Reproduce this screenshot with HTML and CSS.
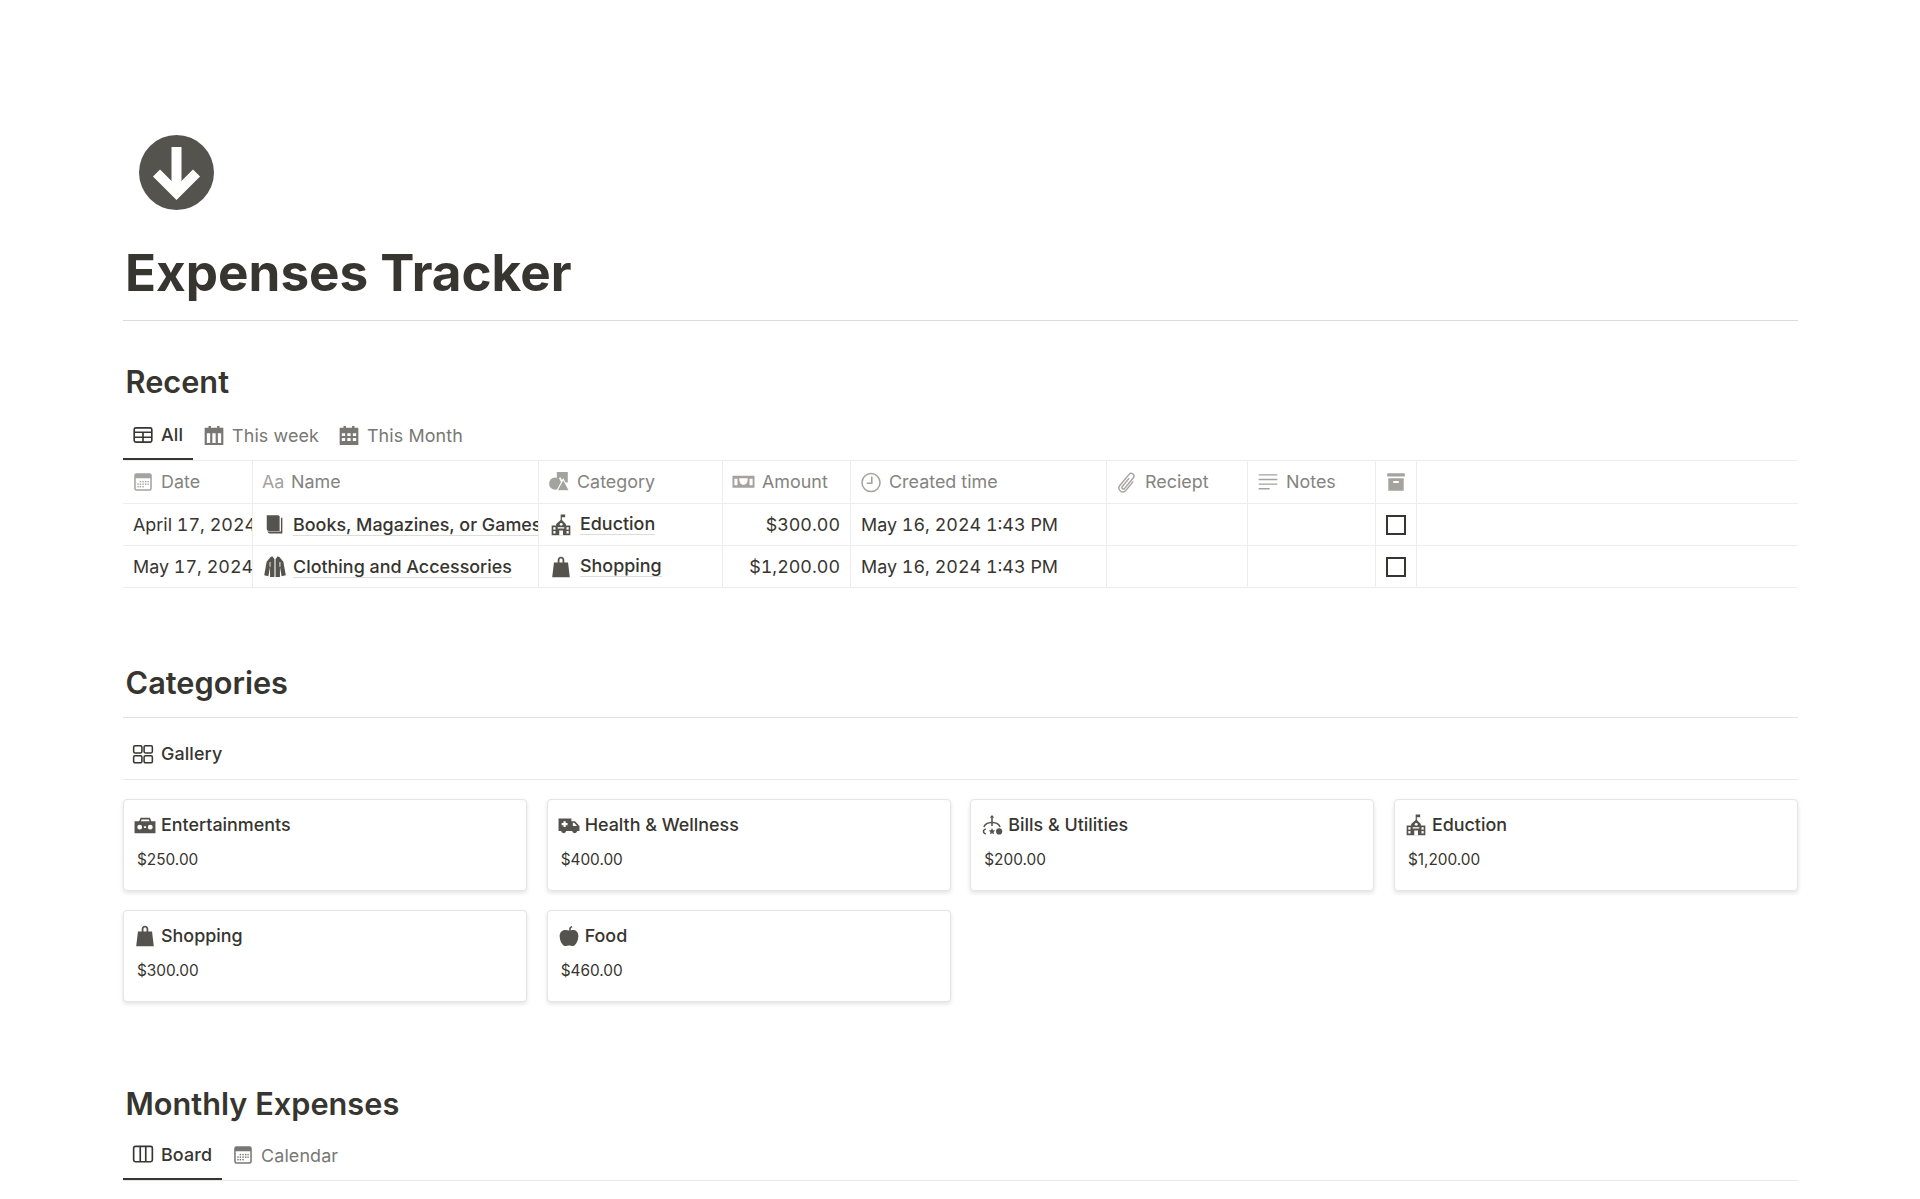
FILE: index.html
```html
<!DOCTYPE html>
<html lang="en">
<head>
<meta charset="utf-8">
<title>Expenses Tracker</title>
<link rel="stylesheet" href="styles.css">
</head>
<body>
<svg class="sprite" aria-hidden="true">
  <symbol id="i-school" viewBox="0 0 20 20"><path d="M9.700.5v5L5.600 9.200v1.300H1.500v8.900h17v-8.900h-4.100V9.200L10.800 5.500V3H13.800V.5z"/><g fill="#fff"><rect x="3" y="12" width="2" height="2.200"/><rect x="3" y="15.500" width="2" height="2.200"/><rect x="15" y="12" width="2" height="2.200"/><rect x="15" y="15.500" width="2" height="2.200"/><circle cx="10.200" cy="9.400" r="1.300"/><rect x="7" y="12" width="6" height="1.200"/><rect x="8.400" y="15" width="3.400" height="4.500"/></g></symbol>
  <symbol id="i-bag" viewBox="0 0 20 20"><path d="M7 6V3.600C7 1.800 8.200.6 10 .6s3 1.200 3 3V6h3.400l1.600 13.400H2L3.600 6zM8.600 6h2.800V3.600c0-.9-.5-1.400-1.400-1.400s-1.400.5-1.400 1.400z" fill-rule="evenodd"/></symbol>
  <symbol id="i-cal" viewBox="0 0 20 20"><path fill-rule="evenodd" d="M4 2h12a2 2 0 0 1 2 2v12a2 2 0 0 1-2 2H4a2 2 0 0 1-2-2V4a2 2 0 0 1 2-2zm-.6 4.500V16c0 .4.3.7.7.7h11.800c.4 0 .7-.3.7-.7V6.500z"/><g><rect x="7" y="9" width="1.300" height="1.300"/><rect x="9.400" y="9" width="1.300" height="1.300"/><rect x="11.800" y="9" width="1.300" height="1.300"/><rect x="14" y="9" width="1.200" height="1.300"/><rect x="4.800" y="11.300" width="1.300" height="1.300"/><rect x="7" y="11.300" width="1.300" height="1.300"/><rect x="9.400" y="11.300" width="1.300" height="1.300"/><rect x="11.800" y="11.300" width="1.300" height="1.300"/><rect x="14" y="11.300" width="1.200" height="1.300"/><rect x="4.800" y="13.600" width="1.300" height="1.300"/><rect x="7" y="13.600" width="1.300" height="1.300"/><rect x="9.400" y="13.600" width="1.300" height="1.300"/></g></symbol>
</svg>
<main class="page">
  <div class="page-icon">
    <svg viewBox="0 0 75 75" class="arrow"><circle cx="37.500" cy="37.500" r="37.500" fill="#55534e"/><path d="M37.500 12v44" stroke="#fff" stroke-width="10" fill="none"/><path d="M17.500 38l20 20 20-20" stroke="#fff" stroke-width="10" fill="none"/></svg>
  </div>
  <h1 class="title">Expenses Tracker</h1>
  <div class="rule"></div>

  <section class="recent">
    <h2 class="heading">Recent</h2>
    <div class="tabs">
      <div class="tab active">
        <svg class="ic" viewBox="0 0 20 20"><path fill="none" stroke="currentColor" stroke-width="1.500" d="M3.500 3.500h13a1.500 1.500 0 0 1 1.500 1.500v10a1.500 1.500 0 0 1-1.500 1.500h-13A1.500 1.500 0 0 1 2 15V5a1.500 1.500 0 0 1 1.500-1.500zM2 7.500h16M2 12h16M10 7.500v9"/></svg>
        <span>All</span>
      </div>
      <div class="tab">
        <svg class="ic" viewBox="0 0 20 20"><path fill-rule="evenodd" d="M5 .8h2.200v1.700h5.600V.8H15v1.700h3.500v15.700h-17V2.500H5zM3.500 7.500v8.900h3v-8.900zm5 0v8.900h3v-8.900zm5 0v8.900h3v-8.900z"/></svg>
        <span>This week</span>
      </div>
      <div class="tab">
        <svg class="ic" viewBox="0 0 20 20"><path fill-rule="evenodd" d="M5 .8h2.200v1.700h5.600V.8H15v1.700h3.500v15.700h-17V2.500H5zM3.500 7.500v2.600h3V7.500zm5 0v2.600h3V7.500zm5 0v2.600h3V7.500zm-10 4.300v2.800h3v-2.800zm5 0v2.800h3v-2.800zm5 0v2.800h3v-2.800z"/></svg>
        <span>This Month</span>
      </div>
    </div>
    <div class="table">
      <div class="row head">
        <div class="cell"><svg class="ic hi"><use href="#i-cal"/></svg><span>Date</span></div>
        <div class="cell"><span class="aa">Aa</span><span>Name</span></div>
        <div class="cell"><svg class="ic hi" viewBox="0 0 20 20"><path d="M8 1h10v9.500h-3.800L11 5.500 8.500 9.300 8 8.800z"/><circle cx="6.500" cy="11.500" r="5.500"/><path d="M13.800 7.500l5.700 10.500H8.200z" stroke="#fff" stroke-width="1"/></svg><span>Category</span></div>
        <div class="cell money"><svg class="ic hi wide" viewBox="0 0 24 20"><path fill-rule="evenodd" d="M.5 3.500h23v12.500H.5zM2.500 6.500v7h3.200v-7zm15.800 0v7h3.200v-7zM7.500 6c.3 4.500 1.300 6.800 4.500 6.800S16.200 10.500 16.500 6z"/></svg><span>Amount</span></div>
        <div class="cell"><svg class="ic hi" viewBox="0 0 20 20"><circle cx="10" cy="10.500" r="8.200" fill="none" stroke="currentColor" stroke-width="1.400"/><path d="M10.700 5v6.200H6.200" fill="none" stroke="currentColor" stroke-width="1.400"/></svg><span>Created time</span></div>
        <div class="cell"><svg class="ic hi" viewBox="0 0 20 20"><path fill="none" stroke="currentColor" stroke-width="1.300" d="M12 6.500l-6.400 7.800c-1 1.300 1.100 2.900 2.200 1.600l8-9.700c2-2.500-1.800-5.600-3.900-3.100L3.500 13.200c-2.900 3.700 2.600 8 5.500 4.400l6.700-8.200"/></svg><span>Reciept</span></div>
        <div class="cell"><svg class="ic hi" viewBox="0 0 20 20"><path fill="none" stroke="currentColor" stroke-width="1.300" d="M1.500 3.500h17M1.500 7.700h17M1.500 11.900h17M1.500 16.100h10"/></svg><span>Notes</span></div>
        <div class="cell narrow"><svg class="ic hi" viewBox="0 0 20 20"><path fill-rule="evenodd" d="M2 2h16v3H2zM3 6.500h14V18H3zM7.500 9v1.800h5V9z"/></svg></div>
      </div>
      <div class="row">
        <div class="cell clip value">April 17, 2024</div>
        <div class="cell clip name"><svg class="ic dark" viewBox="0 0 20 20"><path d="M2.500 1.200h10.700l1 1v13.300H4.500a2 2 0 0 1-2-2z"/><path d="M15.400 3.500h1.300v14.200H5.500a2.500 2.500 0 0 1-2.400-1.700h12.300z"/></svg><a class="link">Books, Magazines, or Games</a></div>
        <div class="cell clip cat"><svg class="ic dark"><use href="#i-school"/></svg><a class="link">Eduction</a></div>
        <div class="cell num value">$300.00</div>
        <div class="cell value">May 16, 2024 1:43 PM</div>
        <div class="cell"></div>
        <div class="cell"></div>
        <div class="cell narrow"><span class="check"></span></div>
      </div>
      <div class="row">
        <div class="cell clip value">May 17, 2024</div>
        <div class="cell clip name"><svg class="ic dark" viewBox="0 0 20 20"><path d="M7.500 .3L5.800 1.200 2.400 5.200 .2 17.500l3.800.9 1.500-8.600v9.300h4V2.800zM12.500 .3l1.700.9 3.400 4 2.200 12.300-3.800.9-1.500-8.600v9.300h-4V2.800z"/><path d="M5.500 5.500v4.300M14.500 5.500v4.300" stroke="#fff" stroke-width=".8" fill="none"/></svg><a class="link">Clothing and Accessories</a></div>
        <div class="cell clip cat"><svg class="ic dark"><use href="#i-bag"/></svg><a class="link">Shopping</a></div>
        <div class="cell num value">$1,200.00</div>
        <div class="cell value">May 16, 2024 1:43 PM</div>
        <div class="cell"></div>
        <div class="cell"></div>
        <div class="cell narrow"><span class="check"></span></div>
      </div>
    </div>
  </section>

  <section class="categories">
    <h2 class="heading">Categories</h2>
    <div class="rule thin"></div>
    <div class="tabs gallery-tabs">
      <div class="tab">
        <svg class="ic" viewBox="0 0 20 20"><g fill="none" stroke="currentColor" stroke-width="1.400"><rect x="1.500" y="2.500" width="7.500" height="6.500" rx="1.200"/><rect x="11" y="2.500" width="7.500" height="6.500" rx="1.200"/><rect x="1.500" y="11.500" width="7.500" height="6.500" rx="1.200"/><rect x="11" y="11.500" width="7.500" height="6.500" rx="1.200"/></g></svg>
        <span>Gallery</span>
      </div>
    </div>
    <div class="gallery">
      <article class="card">
        <div class="card-title"><svg class="ic dark" viewBox="0 0 20 20"><path fill-rule="evenodd" d="M6 3.500h8.500l1.300 3H19.500v11H.5v-11h4.200zM7 5l-.8 1.500h8L13.500 5zM5.200 9.800a2.200 2.200 0 1 0 0 4.400 2.200 2.200 0 0 0 0-4.400zm9.600 0a2.200 2.200 0 1 0 0 4.400 2.200 2.200 0 0 0 0-4.400zM9 11.200v1.600h2v-1.600z"/></svg><span>Entertainments</span></div>
        <div class="card-price">$250.00</div>
      </article>
      <article class="card">
        <div class="card-title"><svg class="ic dark" viewBox="0 0 20 20"><path fill-rule="evenodd" d="M.5 4h11.700v2.500h3.300l4 4.500v4.500h-2a2.400 2.400 0 0 1-4.700 0H7.500a2.400 2.400 0 0 1-4.700 0H.5zM5 6.500v1.700H3.300v2H5v1.700h2v-1.700h1.700v-2H7V6.500zM13.500 8v3h3.800l-2.600-3z"/></svg><span>Health &amp; Wellness</span></div>
        <div class="card-price">$400.00</div>
      </article>
      <article class="card">
        <div class="card-title"><svg class="ic dark" viewBox="0 0 20 20"><path d="M10 1l2 2.500h-1.300V7c3.300.2 6.200 1.500 7.300 4.500l-1.300.5c-.9-2.200-3.200-3.300-6-3.500v2.500H9.300V8.500c-2.800.2-5.100 1.300-6 3.500L2 11.500C3.100 8.500 6 7.200 9.300 7V3.500H8z"/><circle cx="16.500" cy="15.800" r="2.800"/><path d="M10 12.800l.9 2 2.100.2-1.600 1.400.5 2.100-1.900-1.100-1.900 1.100.5-2.100L7 15l2.100-.2z"/><path d="M4.500 13.200v1.200c-1 .1-1.500.7-1.500 1.500s.5 1.400 1.500 1.500v1.200c-1.800-.1-2.900-1.200-2.900-2.700s1.100-2.600 2.900-2.700z"/></svg><span>Bills &amp; Utilities</span></div>
        <div class="card-price">$200.00</div>
      </article>
      <article class="card">
        <div class="card-title"><svg class="ic dark"><use href="#i-school"/></svg><span>Eduction</span></div>
        <div class="card-price">$1,200.00</div>
      </article>
      <article class="card">
        <div class="card-title"><svg class="ic dark"><use href="#i-bag"/></svg><span>Shopping</span></div>
        <div class="card-price">$300.00</div>
      </article>
      <article class="card">
        <div class="card-title"><svg class="ic dark" viewBox="0 0 20 20"><path d="M10.300 5C9.800 3 10.300 1.500 12.500 .8l.6 1.200c-1.300.5-1.700 1.500-1.500 3 2.900-1.200 6.900 0 6.900 5 0 4.500-2.700 9.200-5.300 9.200-1.300 0-1.800-.6-3.200-.6s-1.900.6-3.200.6C4.200 19.200 1.500 14.500 1.500 10c0-5 4.500-6.500 8.800-5z"/></svg><span>Food</span></div>
        <div class="card-price">$460.00</div>
      </article>
    </div>
  </section>

  <section class="monthly">
    <h2 class="heading">Monthly Expenses</h2>
    <div class="tabs monthly-tabs">
      <div class="tab active">
        <svg class="ic" viewBox="0 0 20 20"><path fill="none" stroke="currentColor" stroke-width="1.500" d="M3 3h14a1.500 1.500 0 0 1 1.500 1.500v11A1.500 1.500 0 0 1 17 17H3a1.500 1.500 0 0 1-1.500-1.500v-11A1.500 1.500 0 0 1 3 3zM7.500 3v14M12.500 3v14"/></svg>
        <span>Board</span>
      </div>
      <div class="tab">
        <svg class="ic"><use href="#i-cal"/></svg>
        <span>Calendar</span>
      </div>
    </div>
  </section>
</main>
</body>
</html>
```
FILE: styles.css
```css
* { box-sizing: border-box; }
html, body { margin: 0; padding: 0; background: #fff; }
body {
  font-family: Inter, "Noto Sans", "Liberation Sans", sans-serif;
  color: #37352f;
  height: 1199px;
  overflow: hidden;
}
.sprite { display: none; }
.page { padding: 135px 122px 0 123px; }

.page-icon { height: 75px; padding-left: 16px; }
.arrow { width: 75px; height: 75px; display: block; }

.title {
  margin: 32px 0 0;
  padding-left: 2px;
  font-size: 51.2px;
  line-height: 60px;
  font-weight: 700;
  color: #37352f;
}
.rule { height: 1px; background: #dcdbd9; margin-top: 18px; }
.rule.thin { margin-top: 15px; background: #e3e2e0; }

.heading {
  margin: 0;
  padding-left: 2.500px;
  font-size: 30.720px;
  line-height: 38px;
  font-weight: 600;
  color: #37352f;
}
.recent { margin-top: 42px; }
.categories { margin-top: 76px; }
.monthly { margin-top: 83px; }

.tabs { display: flex; gap: 1px; }
.recent .tabs { margin-top: 15px; }
.tab {
  display: flex;
  align-items: center;
  gap: 7px;
  padding: 0 9px 5px;
  font-size: 17.920px;
  letter-spacing: 0.1px;
  font-weight: 400;
  color: #787774;
  height: 44px;
}
.tab.active {
  color: #37352f;
  font-weight: 500;
  padding-right: 10px;
  border-bottom: 2px solid #37352f;
}

.ic { width: 22px; height: 22px; flex: none; display: block; fill: currentColor; }
.ic.wide { width: 23px; }
.hi { color: #a5a39e; }
.dark { color: #55534e; }

.table { border-top: 1px solid #eeedec; }
.row {
  display: grid;
  grid-template-columns: 130px 286px 184px 128px 256px 141px 128px 41px 1fr;
  height: 42px;
  border-bottom: 1px solid #eeedec;
  font-size: 17.920px;
}
.row.head { color: #85837f; height: 43px; }
.cell {
  display: flex;
  align-items: center;
  gap: 7px;
  padding: 0 9px;
  border-right: 1px solid #eeedec;
  white-space: nowrap;
  overflow: hidden;
}
.row.head .cell { padding-bottom: 1px; }
.cell.value { font-variant-numeric: tabular-nums; padding-left: 10px; padding-right: 0; }
.cell.name { padding-left: 11px; gap: 7px; padding-right: 0; }
.cell.cat { padding-left: 11px; gap: 8px; }
.cell.num { justify-content: flex-end; padding-right: 10px; }
.cell.narrow { justify-content: center; padding: 0; }
.cell.money { padding-right: 0; }
.aa { font-size: 17.920px; color: #a5a39e; width: 22px; flex: none; }
.link {
  color: #37352f;
  font-weight: 500;
  line-height: 20px;
  border-bottom: 1px solid #dddcda;
}
.name .link { margin-top: 2px; }
.check {
  display: block;
  width: 20px;
  height: 20px;
  border: 2px solid #37352f;
}

.gallery-tabs { height: 62px; border-bottom: 1px solid #e9e8e6; align-items: center; padding-top: 10px; }
.gallery-tabs .tab { padding: 0 9px; color: #37352f; font-weight: 500; height: auto; }
.gallery {
  display: grid;
  grid-template-columns: repeat(4, 1fr);
  column-gap: 19.500px;
  row-gap: 19px;
  margin-top: 19px;
}
.card {
  height: 92px;
  border: 1px solid #e6e5e3;
  border-radius: 4px;
  background: #fff;
  box-shadow: 0 2px 4px rgba(15, 15, 15, 0.12);
  padding: 14px 10px 0;
}
.card-title {
  display: flex;
  align-items: center;
  gap: 5px;
  font-size: 17.920px;
  font-weight: 500;
  line-height: 20px;
}
.card-price {
  margin-top: 14px;
  padding-left: 3px;
  font-size: 15.360px;
  line-height: 20px;
  font-weight: 400;
}

.monthly-tabs { margin-top: 12px; border-bottom: 1px solid #e9e8e6; }
.monthly-tabs .tab { height: 45px; }
```
